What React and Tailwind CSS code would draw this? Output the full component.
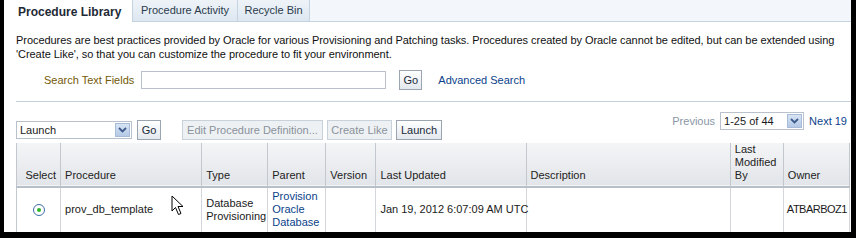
import React from 'react';

const font = { fontFamily: '"Liberation Sans", Arial, sans-serif' };

function Btn({ children, disabled, className = '' }) {
  return (
    <button
      className={`h-[20px] px-0 border text-[11px] leading-none whitespace-nowrap ${
        disabled
          ? 'border-[#c9d1da] bg-[#eef1f4] text-[#8a929a]'
          : 'border-[#9aa5b1] bg-gradient-to-b from-[#ffffff] to-[#e3e8ee] text-[#1a2a3a]'
      } ${className}`}
    >
      {children}
    </button>
  );
}

function Arrow() {
  return (
    <span className="flex items-center justify-center w-[15px] h-[14px] bg-gradient-to-b from-[#d8e4f4] to-[#b4c9e6] border border-[#a8bcd8]">
      <svg width="9" height="6" viewBox="0 0 9 6">
        <path d="M1 1 L4.5 4.5 L8 1" fill="none" stroke="#3c5a8a" strokeWidth="1.8" />
      </svg>
    </span>
  );
}

function Select({ value, w }) {
  return (
    <div className={`flex items-center justify-between h-[18px] border border-[#b9c2cc] bg-white pl-[3px] pr-[1px] ${w}`}>
      <span className="text-[11px] text-[#1a1a1a]">{value}</span>
      <Arrow />
    </div>
  );
}

export default function App() {
  const th = 'border-r border-[#c3c8ce] px-[4px] pb-[4px] align-bottom text-left font-normal text-[11px] text-[#222] leading-[13px]';
  const td = 'border-r border-[#d3d7dc] px-[4px] align-middle text-[11px] leading-[13px]';
  return (
    <div className="w-[856px] h-[238px] bg-black" style={font}>
      <div className="ml-[4px] w-[847px] h-[232px] bg-white overflow-hidden">
        {/* tabs */}
        <div className="flex h-[22px] bg-[#f3f6fa] border-b border-[#c5d2df]">
          <div className="w-[128px] h-[23px] bg-white flex items-center pl-[14px] font-bold text-[12px] text-[#1e2a36]">
            Procedure Library
          </div>
          <div className="w-[106px] border-l border-r border-[#c5d2df] bg-gradient-to-b from-[#eef3f8] to-[#dde7f1] flex items-center justify-center text-[11px] text-[#2b3b4b]">
            Procedure Activity
          </div>
          <div className="w-[72px] border-r border-[#c5d2df] bg-gradient-to-b from-[#eef3f8] to-[#dde7f1] flex items-center justify-center text-[11px] text-[#2b3b4b]">
            Recycle Bin
          </div>
        </div>

        <p className="pl-[12px] pr-0 mt-[11px] text-[11px] leading-[14px] text-[#111] tracking-[-0.05px]">
          Procedures are best practices provided by Oracle for various Provisioning and Patching tasks. Procedures created by Oracle cannot be edited, but can be extended using 'Create Like', so that you can customize the procedure to fit your environment.
        </p>

        {/* search */}
        <div className="flex items-center mt-[9px] h-[20px]">
          <span className="ml-[40px] text-[11px] text-[#735a08]">Search Text Fields</span>
          <div className="ml-[7px] w-[245px] h-[18px] border border-[#b9c2cc] bg-white" />
          <Btn className="ml-[13px] w-[23px]">Go</Btn>
          <span className="ml-[16px] text-[11px] text-[#0b3f8a]">Advanced Search</span>
        </div>

        <div className="ml-[12px] mt-[11px] border-t border-[#c5d0db]" />

        {/* toolbar */}
        <div className="flex items-start mt-[10px] ml-[12px] pr-[4px]">
          <div className="flex items-center mt-[8px]">
            <Select value="Launch" w="w-[116px]" />
            <Btn className="ml-[5px] w-[24px]">Go</Btn>
            <Btn disabled className="ml-[21px] w-[141px]">Edit Procedure Definition...</Btn>
            <Btn disabled className="ml-[4px] w-[65px]">Create Like</Btn>
            <Btn className="ml-[4px] w-[46px]">Launch</Btn>
          </div>
          <div className="ml-auto flex items-center gap-[5px]">
            <span className="text-[11px] text-[#8a96a6]">Previous</span>
            <Select value="1-25 of 44" w="w-[84px]" />
            <span className="text-[11px] text-[#0b3f8a]">Next 19</span>
          </div>
        </div>

        {/* table */}
        <div className="relative ml-[12px] mt-[3px] w-[834px]">
          <table className="w-full border-collapse border-l border-r border-[#c3c8ce] table-fixed">
            <colgroup>
              <col className="w-[44px]" />
              <col className="w-[141px]" />
              <col className="w-[66px]" />
              <col className="w-[58px]" />
              <col className="w-[50px]" />
              <col className="w-[150px]" />
              <col className="w-[204px]" />
              <col className="w-[53px]" />
              <col className="w-[66px]" />
            </colgroup>
            <thead>
              <tr className="h-[44px] bg-gradient-to-b from-[#f4f5f7] to-[#e2e5e9] border-b-2 border-[#b9bfc6]">
                <th className={`${th} text-right`}>Select</th>
                <th className={th}>Procedure</th>
                <th className={th}>Type</th>
                <th className={th}>Parent</th>
                <th className={th}>Version</th>
                <th className={th}>Last Updated</th>
                <th className={th}>Description</th>
                <th className={th}>Last<br />Modified<br />By</th>
                <th className={th}>Owner</th>
              </tr>
            </thead>
            <tbody>
              <tr className="h-[45px] border-b border-[#d3d7dc]">
                <td className={`${td} text-center`}>
                  <span className="inline-flex items-center justify-center w-[12px] h-[12px] rounded-full border border-[#3d6ea8] bg-white align-middle">
                    <span className="w-[4px] h-[4px] rounded-full bg-[#2fb52f]" />
                  </span>
                </td>
                <td className={`${td} text-[#1a1a1a]`}>prov_db_template</td>
                <td className={`${td} text-[#1a1a1a]`}>Database<br />Provisioning</td>
                <td className={`${td} text-[#0b3f8a]`}>Provision<br />Oracle<br />Database</td>
                <td className={td}></td>
                <td className={`${td} text-[#1a1a1a] whitespace-nowrap`}>Jan 19, 2012 6:07:09 AM UTC</td>
                <td className={td}></td>
                <td className={td}></td>
                <td className={`${td} text-[#1a1a1a] pl-[3px] pr-0 text-[10.5px] tracking-[-0.5px] whitespace-nowrap`}>ATBARBOZ1</td>
              </tr>
            </tbody>
          </table>
          <svg className="absolute left-[155px] top-[52px]" width="14" height="21" viewBox="0 0 14 21">
            <path d="M1 1 L1 16 L4.5 12.5 L7.5 19.5 L10 18.5 L7 11.5 L12 11.5 Z" fill="white" stroke="black" strokeWidth="1" strokeLinejoin="miter" />
          </svg>
        </div>
      </div>
    </div>
  );
}
